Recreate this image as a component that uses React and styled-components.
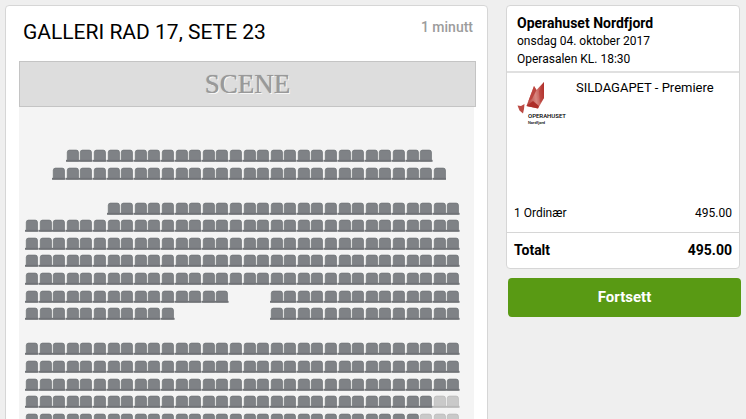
import React from 'react';
import styled, { createGlobalStyle } from 'styled-components';

// data
const COLUMNS = 32;

// each block is [first column, last column, sold out]
const seatRows = [
    [[4, 30]],
    [[3, 31]],
    [],
    [[7, 32]],
    [[1, 32]],
    [[1, 32]],
    [[1, 32]],
    [[1, 32]],
    [[1, 15], [19, 32]],
    [[1, 11], [19, 32]],
    [],
    [[1, 32]],
    [[1, 32]],
    [[1, 32]],
    [[1, 30], [31, 32, true]],
    [[1, 29], [30, 32, true]],
];

// components
const GlobalStyle = createGlobalStyle`
    * {
        box-sizing: border-box;
    }
    body {
        margin: 0;
        background-color: #EFEFEF;
        color: #000000;
        font-family: Roboto, "Liberation Sans", sans-serif;
    }
    h1, h2, h3, p {
        margin: 0;
    }
`;

const Page = styled.div`
    display: grid;
    grid-template-columns: minmax(0, 1fr) 234px;
    gap: 18px;
    align-items: start;
    padding: 5px 6px 0 5px;
`;

const Panel = styled.section`
    background-color: #FFFFFF;
    border: 1px solid #D6D6D6;
    border-radius: 4px;
`;

const SeatPanel = styled(Panel)`
    padding: 0 11px 13px 13px;
`;

const PanelHeader = styled.header`
    display: flex;
    justify-content: space-between;
    align-items: flex-start;
    height: 55px;
    padding: 12px 3px 0 4px;
    h1 {
        font-size: 21px;
        font-weight: 400;
        line-height: 28px;
    }
    p {
        font-size: 14px;
        line-height: 18px;
        font-weight: 500;
        color: #9C9C9C;
    }
`;

const Stage = styled.div`
    height: 46px;
    border: 1px solid #C4C4C4;
    background-color: #DDDDDD;
    font-family: "Liberation Serif", serif;
    font-size: 27px;
    line-height: 44px;
    text-align: center;
    color: #999999;
    text-shadow: 0 0 1px #A0A0A0, 1px 1px 0 #FFFFFF;
`;

const SeatMap = styled.div`
    display: grid;
    grid-template-columns: repeat(${COLUMNS}, minmax(0, 1fr));
    margin-right: 2px;
    padding: 42px 14px 24px 6px;
    background-color: #F4F4F4;
`;

const Seat = styled.button`
    grid-row: ${({ $row }) => $row};
    grid-column: ${({ $column }) => $column};
    padding: 0;
    border: 0;
    background: none;
    color: ${({ disabled }) => (disabled ? '#C9C9C9' : '#7F8286')};
    stroke: ${({ disabled }) => (disabled ? '#B9B9B9' : '#707377')};
    cursor: pointer;
    svg {
        display: block;
        width: 100%;
    }
`;

// keeps an aisle as tall as a row of seats
const Aisle = styled.div`
    grid-row: ${({ $row }) => $row};
    grid-column: 1;
    aspect-ratio: 17 / 22;
`;

const Sidebar = styled.aside`
    display: flex;
    flex-direction: column;
    gap: 9px;
`;

const Venue = styled.header`
    padding: 8px 10px 3px;
    border-bottom: 2px solid #E0E0E0;
    font-size: 12px;
    line-height: 18px;
    h2 {
        font-size: 14px;
        font-weight: 700;
        line-height: 18px;
    }
`;

const Show = styled.div`
    display: flex;
    gap: 8px;
    height: 131px;
    padding: 6px 10px 0;
    svg {
        width: 51px;
        height: 45px;
        margin-top: 2px;
    }
    h3 {
        font-size: 13px;
        font-weight: 400;
        line-height: 18px;
    }
`;

const Prices = styled.table`
    width: 100%;
    border-collapse: collapse;
    font-size: 12px;
    line-height: 18px;
    th, td {
        padding: 0 7px;
        font-weight: 400;
        text-align: left;
    }
    td {
        text-align: right;
    }
    tbody tr {
        height: 28px;
        vertical-align: top;
    }
    tfoot tr {
        height: 36px;
        border-top: 1px solid #D6D6D6;
        font-size: 14px;
    }
    tfoot th, tfoot td {
        font-weight: 700;
    }
`;

const ContinueButton = styled.button`
    height: 39px;
    margin: 0 -1px 0 2px;
    padding: 0 0 2px;
    border: 0;
    border-radius: 4px;
    background-color: #599A14;
    color: #FFFFFF;
    font-family: inherit;
    font-size: 15px;
    font-weight: 700;
    cursor: pointer;
`;

function SeatIcon() {
    return (
        <svg viewBox="0 0 17 22" aria-hidden="true">
            <path d="M1.6 15V4.2Q1.6 1.4 4.4 1.4H12.8Q15.6 1.4 15.6 4.2V15Z" fill="currentColor" strokeWidth="0.9" />
            <path d="M0 14.8H17" fill="none" strokeWidth="2.4" />
        </svg>
    );
}

function VenueLogo() {
    return (
        <svg viewBox="0 0 51 45" role="img" aria-label="Operahuset Nordfjord">
            <defs>
                <linearGradient id="wing" x1="0" y1="0.5" x2="1" y2="0.3">
                    <stop offset="0" stopColor="#B5423C" />
                    <stop offset="0.5" stopColor="#D98780" />
                    <stop offset="1" stopColor="#B0302B" />
                </linearGradient>
            </defs>
            <path d="M9.5 25L17 5L19.5 9L27 1V17L21 27.5Z" fill="url(#wing)" />
            <path d="M17 5L19.5 9L15 18L11.5 20Z" fill="#BC453F" />
            <path d="M27 1V17L23 22L22 10Z" fill="#B5352F" opacity="0.5" />
            <path d="M9.5 25L16 20L22 25L21 27.5Z" fill="#AE2F2A" />
            <path d="M0.5 24.5L4 25L7.5 23L7 28L6 32.5L2.5 29.5Z" fill="#BC4A44" />
            <text x="11" y="37" fontSize="6" fontWeight="500" fill="#000000">OPERAHUSET</text>
            <text x="11" y="43" fontSize="4" fontWeight="500" fill="#000000">Nordfjord</text>
        </svg>
    );
}

function SeatBlock({ row, from, to, sold }) {
    const columns = Array.from({ length: to - from + 1 }, (_, i) => from + i);
    return columns.map((column) => (
        <Seat
            key={column}
            type="button"
            $row={row}
            $column={column}
            disabled={sold}
            aria-label={`Rad ${row}, sete ${column}`}
        >
            <SeatIcon />
        </Seat>
    ));
}

function App() {
    return (
        <>
            <GlobalStyle />
            <Page>
                <SeatPanel>
                    <PanelHeader>
                        <h1>GALLERI RAD 17, SETE 23</h1>
                        <p>1 minutt</p>
                    </PanelHeader>
                    <Stage>SCENE</Stage>
                    <SeatMap>
                        {seatRows.map((blocks, index) => (
                            blocks.length === 0
                                ? <Aisle key={index} $row={index + 1} />
                                : blocks.map(([from, to, sold]) => (
                                    <SeatBlock key={`${index}-${from}`} row={index + 1} from={from} to={to} sold={sold} />
                                ))
                        ))}
                    </SeatMap>
                </SeatPanel>
                <Sidebar>
                    <Panel>
                        <Venue>
                            <h2>Operahuset Nordfjord</h2>
                            <p>onsdag 04. oktober 2017</p>
                            <p>Operasalen KL. 18:30</p>
                        </Venue>
                        <Show>
                            <VenueLogo />
                            <h3>SILDAGAPET - Premiere</h3>
                        </Show>
                        <Prices>
                            <tbody>
                                <tr>
                                    <th scope="row">1 Ordinær</th>
                                    <td>495.00</td>
                                </tr>
                            </tbody>
                            <tfoot>
                                <tr>
                                    <th scope="row">Totalt</th>
                                    <td>495.00</td>
                                </tr>
                            </tfoot>
                        </Prices>
                    </Panel>
                    <ContinueButton type="button">Fortsett</ContinueButton>
                </Sidebar>
            </Page>
        </>
    );
}

export default App;
